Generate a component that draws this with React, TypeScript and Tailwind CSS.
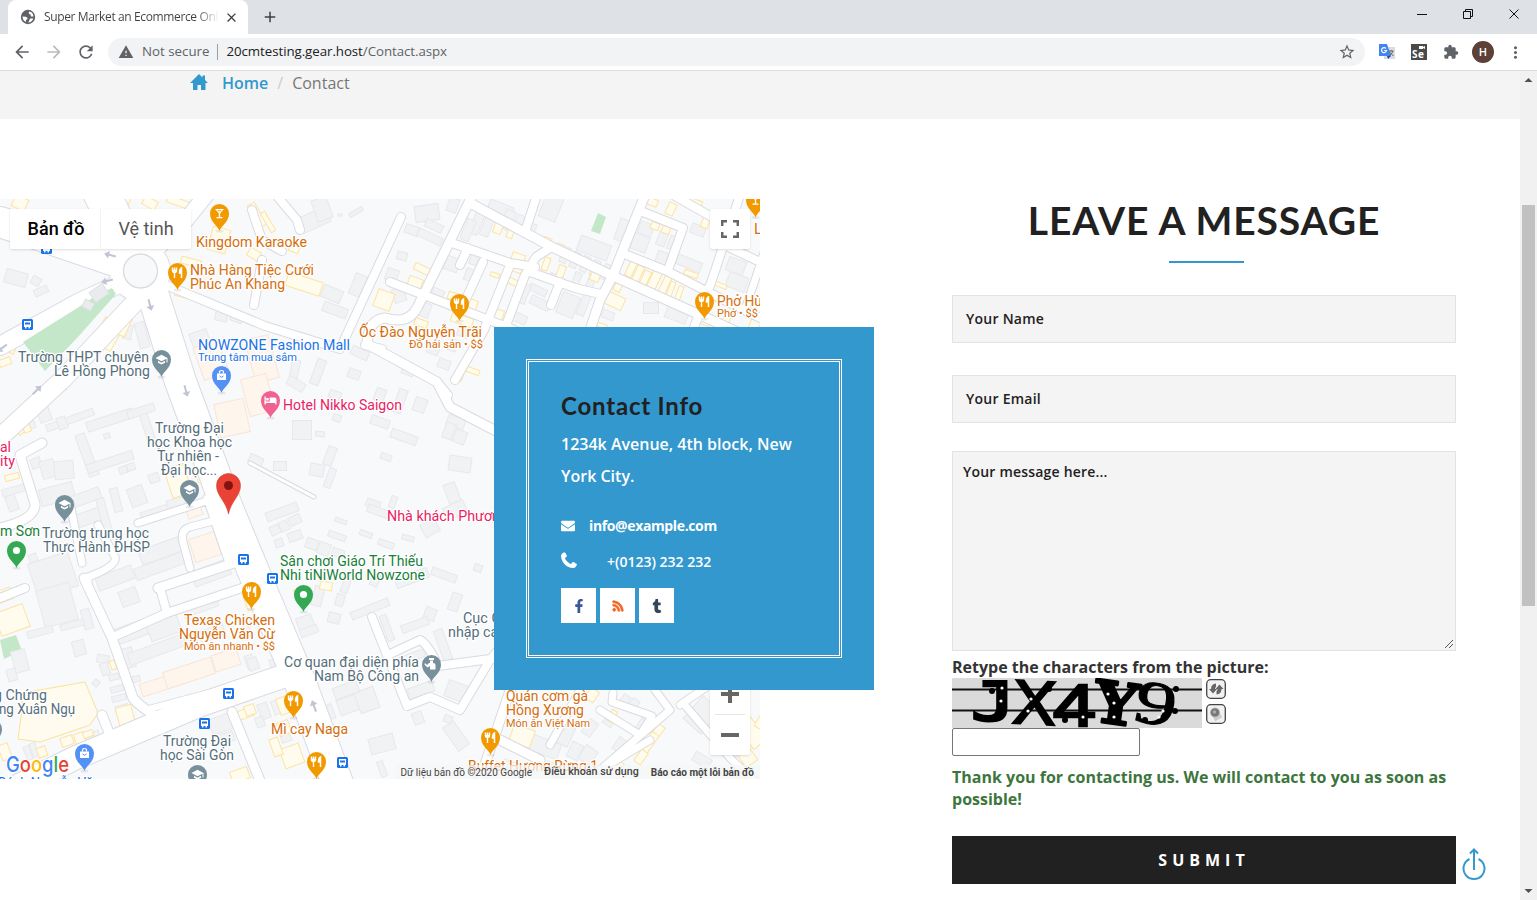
import React from "react";
import { FaFacebookF, FaRss, FaTumblr, FaEnvelope } from "react-icons/fa";
import { MdExtension, MdStarBorder, MdArrowBack, MdArrowForward, MdRefresh, MdWarning, MdClose, MdAdd, MdMoreVert } from "react-icons/md";

const roads: [string, number][] = [
  ["M150 285L180 380L226 505L262 592L300 682L340 790", 31],
  ["M290 674L200 705L75 758L20 785", 23],
  ["M128 280L80 302L0 346", 18],
  ["M137 300L62 380L-5 442", 18],
  ["M100 190L132 255", 36],
  ["M150 255L182 225L206 195", 15],
  ["M0 222L112 260", 30],
  ["M166 285L265 326L340 349L401 217", 8],
  ["M276 195L297 220L300 230M252 210L262 240L282 251M262 260L254 305", 8],
  ["M472 196L448 245L417 308Q408 325 385 318Q368 320 367 344L437 382L450 407L498 432", 9],
  ["M390 282L510 328L540 342", 8],
  ["M452 243L510 263L535 267M483 262L460 312M510 265L484 330L455 380M468 248L460 265M437 382L448 395M365 345L382 349", 8],
  ["M470 203L550 246L613 276L700 315L760 342", 9],
  ["M537 195L525 232M550 248L536 257L525 275L505 328M530 272L575 288L600 294M560 282L551 305", 8],
  ["M645 195L613 275L600 300L590 330", 9],
  ["M643 212L683 228L668 270M627 255L667 271L710 293L760 318M740 195L712 280L693 330M720 243L760 262M675 196L710 216", 8],
  ["M765 250L745 310", 7],
  ["M42 443L20 455L35 504Q36 519 0 528", 9],
  ["M138 523L228 494M228 517L190 527Q180 530 183 542L190 568M207 498L216 525L228 560", 7],
  ["M158 588L255 556", 9],
  ["M70 503L82 563M98 525L115 557Q118 566 88 577L88 585", 7],
  ["M84 578L112 638L133 698Q140 707 162 720", 9],
  ["M113 637L167 613L260 582M160 588L167 613M0 598L25 588", 8],
  ["M145 710L220 690", 6],
  ["M232 712L263 788M102 715L114 745", 9],
  ["M372 617L407 706L430 697L460 710L490 660L498 650M390 654L420 640Q428 644 438 666L498 658", 8],
  ["M512 685L478 785M500 740L540 760", 9],
  ["M613 693L612 702L652 716L640 735L600 710M655 690L670 710L600 770L650 740M683 703L732 760M680 705L705 688M580 690L550 745M732 760L765 790", 7],
  ["M250 463L314 497", 3],
];

type B = [number, number, number, number, number];
const grey: B[] = [
  [16,278,22,14,15],[36,281,9,8,30],[41,291,14,7,-25],[222,313,12,16,12],[237,317,12,10,20],[128,332,8,14,10],[142,335,10,26,-15],[200,339,18,16,-20],[165,338,9,14,-10],
  [314,220,30,16,-25],[322,209,16,22,-20],[340,215,4,2,0],[356,212,15,4,-30],[427,213,24,16,-8],[453,205,10,14,20],[412,230,14,9,20],[434,226,18,8,25],[430,237,26,8,25],[402,256,10,8,15],[392,275,12,12,20],[358,285,12,22,22],[332,294,20,13,22],[335,310,25,10,20],[399,295,12,14,-20],[478,220,9,30,22],[488,224,9,25,22],[468,230,9,22,22],[500,210,25,14,22],[452,264,14,14,20],[475,257,8,16,20],[470,275,10,12,20],[438,293,12,8,25],[425,310,10,14,20],[453,345,8,12,20],[463,332,11,10,20],[444,364,12,9,20],[433,350,12,8,20],
  [295,369,8,18,12],[318,372,9,26,20],[296,384,18,9,30],[354,374,12,9,20],[360,353,18,9,25],[380,395,10,13,20],[335,395,12,8,20],[408,371,12,8,20],
  [552,205,18,30,22],[508,220,10,20,22],[519,224,9,18,22],[530,230,10,14,22],[594,248,32,16,20],[622,230,10,22,20],[565,255,7,16,23],[575,260,7,16,23],[585,264,7,16,23],[595,268,7,16,23],[606,272,7,16,23],[556,278,13,7,20],[576,281,7,18,22],[590,284,7,16,22],[538,290,18,7,25],[540,303,20,9,25],[568,305,18,22,22],[584,304,8,24,22],[522,293,12,20,22],[517,317,20,9,25],
  [646,229,14,12,20],[662,239,9,14,20],[673,243,9,14,20],[640,243,16,16,20],[661,260,11,17,20],[688,263,28,10,22],[736,266,18,14,20],[737,282,20,15,20],[651,308,15,11,0],[677,314,22,14,20],[608,315,12,8,20],[735,244,16,9,20],[698,230,14,10,20],
  [43,411,12,22,-20],[30,422,8,14,-20],[70,420,50,7,-20],[87,455,10,44,-20],[110,420,48,10,-18],[110,462,48,9,-18],[147,426,8,34,-18],[141,411,28,8,-18],[107,436,6,5,-15],[62,423,9,12,-20],[36,463,10,10,-20],[48,469,14,18,-15],[64,470,19,18,-5],[57,494,34,17,-15],[123,470,8,7,-20],[131,467,8,7,-20],[154,478,10,9,-20],[137,496,16,19,-20],[84,498,34,12,-20],[87,518,36,13,-20],[116,500,8,24,-15],[105,519,8,42,-15],[15,490,26,7,-15],[12,503,10,16,-20],[162,510,44,8,-18],[176,503,18,9,-15],[213,508,6,16,-15],[230,542,7,18,-15],[33,558,8,8,-20],[53,575,42,36,-18],[163,550,48,15,-20],[160,566,52,12,-20],[115,578,38,14,-20],[211,573,38,16,-20],
  [57,605,34,38,-15],[40,632,26,7,-15],[87,619,9,20,-15],[79,648,12,15,-15],[20,661,14,22,-15],[12,675,9,12,-15],[72,625,24,6,-15],[129,597,18,16,-20],[136,630,46,16,-20],[164,628,32,18,-20],[200,606,36,12,-20],[128,658,12,20,-15],[161,648,68,12,-20],[205,636,40,12,-20],[103,659,12,8,10],[105,669,8,12,-20],[114,677,10,6,-15],[117,689,13,6,-15],[119,698,14,6,-15],[122,708,13,6,-15],[96,683,6,6,40],[136,679,8,6,-15],[250,662,8,14,-20],[145,723,9,7,-15],[221,724,22,16,-20],[91,738,18,10,-20],[28,753,6,14,-20],[34,750,6,14,-20],[55,765,8,12,-20],[246,632,9,12,-20],[226,738,16,10,-20],
  [337,418,8,7,20],[302,430,19,19,0],[320,434,9,5,5],[380,422,19,9,20],[404,437,27,9,20],[400,401,9,24,20],[420,405,12,14,20],[456,422,18,10,20],[460,437,12,13,20],[449,431,10,16,20],[460,464,22,15,8],[386,457,11,6,20],[280,466,13,9,0],[256,460,14,8,25],[330,456,9,19,20],[317,470,14,12,10],[330,478,7,20,20],[452,493,12,20,-20],[455,510,22,13,-25],[430,528,16,14,-30],[373,504,14,8,20],[380,512,26,8,20],[393,502,6,12,20],[282,512,33,9,-20],[275,530,10,9,-25],[284,526,9,10,-25],[295,520,12,9,-25],[295,536,14,9,-20],[279,543,8,8,-20],[337,536,18,6,20],[366,534,13,5,20],[386,544,16,6,20],[408,538,12,5,15],[341,521,12,4,20],[312,544,12,10,20],[324,549,12,12,20],[338,553,12,8,20],[444,575,26,8,20],[478,568,8,7,20],[375,580,8,12,20],
  [318,596,10,20,15],[334,618,12,10,15],[340,600,8,12,15],[346,585,7,16,20],[305,622,16,12,-20],[309,631,18,8,-20],[370,609,40,8,-22],[412,578,34,10,-20],[455,602,10,18,20],[430,614,11,12,20],[415,625,28,8,-20],[387,628,7,27,-20],[443,645,9,32,-20],[412,657,26,8,-20],[421,690,26,11,-20],[456,691,20,17,20],[316,717,37,15,-20],[348,705,20,16,-20],[367,700,20,22,-20],[346,690,25,12,-20],[382,744,25,16,-15],[456,736,13,28,-35],[418,718,10,12,-20],[448,719,8,7,20],[382,769,6,16,-20],[273,663,6,8,-20],[253,664,10,12,-20],[264,711,10,16,-20],[277,707,9,14,-20],[286,738,10,8,-20],[260,722,8,10,-20],
  [625,700,8,10,35],[634,704,8,10,35],[610,720,10,12,35],[590,728,10,16,35],[565,735,14,20,25],[575,751,12,16,25],[545,747,30,16,20],[588,755,14,16,35],[620,745,10,14,35],[642,725,8,12,35],[702,715,24,30,42],[735,748,13,20,40],[702,760,18,10,30],[512,768,20,12,20],[555,770,20,12,20],
];
const yellow: B[] = [
  [100,202,10,13,20],[112,203,8,14,20],[125,201,9,12,20],[150,203,14,9,30],[178,202,22,7,20],[20,203,14,12,25],[257,215,8,25,-30],[268,222,5,22,-30],[219,240,18,24,15],[254,254,12,9,30],[294,249,10,6,20],[191,262,20,7,15],[182,294,14,6,15],[304,284,36,14,18],[124,315,10,9,20],[108,334,21,28,30],[122,325,14,20,25],[10,349,10,7,25],[5,362,12,7,-20],[60,389,12,7,-30],[25,423,7,19,-20],[19,429,6,11,-35],[12,477,14,6,-15],[178,481,20,30,-18],[201,475,10,13,-20],[5,595,14,12,-20],[12,620,30,24,-20],[113,665,5,9,-20],[126,718,16,24,-15],[244,714,19,9,-20],[67,741,12,9,-20],[80,739,10,12,-20],[88,734,10,6,-20],[42,752,9,10,-20],[5,752,10,16,-20],[62,760,10,14,-20],[240,775,18,12,-20],[302,591,16,5,-10],[326,586,12,8,10],[252,602,13,14,-20],[285,705,14,17,-20],[292,756,20,20,-20],[276,747,9,18,-20],[250,710,10,10,-20],[284,728,12,14,-20],
  [422,269,16,7,25],[415,283,14,11,20],[384,300,17,18,20],[421,323,13,7,20],[453,296,10,7,15],[462,320,22,9,20],[472,305,10,11,20],[473,371,13,5,20],[461,376,4,9,20],[498,228,8,11,20],[510,234,6,8,20],[495,275,9,4,20],[498,315,10,11,20],[547,240,9,5,20],[560,248,6,8,20],[518,258,13,9,20],[515,269,14,5,20],[546,264,6,13,20],[561,272,7,13,20],[511,281,14,6,25],[595,277,9,8,20],[631,269,7,16,25],[638,274,7,17,25],[645,279,7,17,25],[654,281,9,20,25],[665,285,7,18,25],[671,289,5,15,20],[679,294,5,16,20],[675,275,8,4,20],[691,274,14,5,20],[690,282,17,5,20],[720,285,14,4,20],[618,287,7,9,25],[615,301,18,13,25],[704,319,14,11,20],[725,323,7,16,20],[755,324,10,10,20],[655,226,8,7,20],[666,230,8,7,20],[671,209,8,12,25],[652,202,11,7,20],[694,202,16,6,20],[706,221,7,14,20],[600,325,14,4,20],
  [592,695,10,12,35],[612,716,6,12,30],[522,736,22,18,20],[650,742,8,22,35],[659,730,8,10,35],[641,757,8,14,35],[618,766,8,10,35],[752,733,18,28,-40],[765,725,18,12,30],[748,758,14,14,-35],[510,702,14,12,20],
];
const peach: B[] = [[211,360,26,34,-20],[262,359,24,44,-15],[232,418,30,34,-12],[258,395,26,38,-15],[194,511,15,12,-20],[205,547,27,24,-18],[165,683,50,13,-18],[189,673,50,17,-18],[226,660,26,17,-18]];

function Blocks({ list, fill, stroke }: { list: B[]; fill: string; stroke: string }) {
  return (
    <g fill={fill} stroke={stroke} strokeWidth="1">
      {list.map(([x, y, w, h, a], i) => (
        <rect key={i} x={x - w / 2} y={y - h / 2} width={w} height={h} transform={`rotate(${a} ${x} ${y})`} />
      ))}
    </g>
  );
}

const glyphs: Record<string, React.ReactNode> = {
  food: <g fill="none" stroke="#fff"><path d="M-5-5v3.200q0 1.800 2 1.800t2-1.800V-5M-3-5V5.500" strokeWidth="1.400" /><path d="M-5-2.500h4v1.500h-4z" fill="#fff" strokeWidth=".5" /><path d="M4 5.500V-4.500q-2 1-2 5h2" strokeWidth="1.500" fill="#fff" /></g>,
  bar: <path d="M-4.500-4.500h9L.7-.2V3.500H3v1.200h-6V3.500h2.300V-.2zM-2-3.300l.8 1h2.400l.8-1z" fillRule="evenodd" fill="#fff" />,
  school: <path d="M-6-1.500L0-4.800 6-1.500V3H5V-.7L0 1.800zM-3.500 1.300L0 3.200l3.500-1.900v2L0 5.100l-3.500-1.800z" fill="#fff" />,
  shop: <g><path d="M-4.500-2h9v6.500h-9z" fill="#fff" /><path d="M-2-2v-1q0-2 2-2t2 2v1" fill="none" stroke="#fff" strokeWidth="1.200" /><path d="M-2 .5Q0 3 2 .5" fill="none" stroke="#5491f5" /></g>,
  hotel: <path d="M-6-4h1.300V1H-.8V-3H4q2 0 2 2V4H4.700V2.500h-9.400V4H-6zM-4.200-2.500h2.400v2.400h-2.400z" fill="#fff" />,
  dot: <circle r="3.600" fill="#fff" />,
  officer: <g fill="#fff"><path d="M-2.500-6.500h5v2h-5zM-1.500-4h3v2.500h-3z" /><path d="M-6.500-1.500l2 2 2-2h4q2.500 0 2.500 2v4.500h-5.500V1.500l-2.500 1.500-3-3z" /></g>,
};
const pins: [number, number, string, string][] = [
  [219.5, 213.5, "#f29900", "bar"], [177.5, 272.5, "#f29900", "food"], [459.5, 303.5, "#f29900", "food"], [704.5, 301.5, "#f29900", "food"],
  [161.5, 359.5, "#78909c", "school"], [64.5, 504.5, "#78909c", "school"], [189.5, 489.5, "#78909c", "school"], [221.5, 375.5, "#5491f5", "shop"],
  [270.5, 400.5, "#f06292", "hotel"], [16.5, 550.5, "#34a853", "dot"], [303.5, 594.5, "#34a853", "dot"], [251.5, 591.5, "#f29900", "food"],
  [293.5, 700.5, "#f29900", "food"], [316.5, 761.5, "#f29900", "food"], [490.5, 737.5, "#f29900", "food"], [84.5, 753.5, "#5491f5", "shop"],
  [431.5, 664.5, "#78909c", "officer"], [197.5, 774.5, "#78909c", "school"], [755.5, 200, "#f29900", "bar"], [-7.5, 729, "#78909c", "dot"],
];
const buses = [[46.5, 248.5], [27.5, 324.5], [243.5, 559.5], [272.5, 578.5], [228.5, 693.5], [204.5, 723.5], [342.5, 762.5]];
const arrows: [number, number, number][] = [[110, 255, 195], [107, 281, 165], [150, 305, 75], [37, 390, -45], [186, 391, 75], [314, 706, -110], [2, 348, 145]];

const OR = "#d56e0c", BL = "#1a73e8", SL = "#546e7a", PK = "#e91e63", GR = "#188038";
const labels: [string, number, number, number, string, number][] = [
  ["Kingdom Karaoke", 196, 247, 111, OR, 14], ["Nhà Hàng Tiệc Cưới", 190, 275, 124, OR, 14], ["Phúc An Khang", 190, 289, 95, OR, 14],
  ["Ốc Đào Nguyễn Trãi", 359, 337, 123, OR, 14], ["Đồ hải sản • $$", 409, 348, 74, OR, 11], ["Phở Hùng", 717, 306, 60, OR, 14], ["Phở • $$", 717, 317, 41, OR, 11],
  ["L", 754, 234, 8, OR, 14],
  ["NOWZONE Fashion Mall", 198, 350, 152, BL, 14], ["Trung tâm mua sắm", 198, 361, 99, BL, 11],
  ["Trường THPT chuyên", 18, 362, 131, SL, 14], ["Lê Hồng Phong", 54, 376, 96, SL, 14], ["Hotel Nikko Saigon", 283, 410, 119, PK, 14],
  ["Trường Đại", 155, 433, 69, SL, 14], ["học Khoa học", 147, 447, 85, SL, 14], ["Tự nhiên -", 157, 461, 62, SL, 14], ["Đại học...", 161, 475, 56, SL, 14],
  ["al", 0, 452, 11, PK, 14], ["ity", 0, 466, 15, PK, 14], ["m Sơn", 0, 536, 40, GR, 14], ["Trường trung học", 42, 538, 107, SL, 14], ["Thực Hành ĐHSP", 43, 552, 107, SL, 14],
  ["Nhà khách Phương", 387, 521, 121, PK, 14], ["Sân chơi Giáo Trí Thiếu", 280, 566, 143, GR, 14], ["Nhi tiNiWorld Nowzone", 280, 580, 145, GR, 14],
  ["Texas Chicken", 184, 625, 91, OR, 14], ["Nguyễn Văn Cừ", 179, 639, 96, OR, 14], ["Món ăn nhanh • $$", 184, 650, 91, OR, 11],
  ["Cục Quản", 463, 623, 62, SL, 14], ["nhập cảnh", 448, 637, 66, SL, 14], ["Cơ quan đại diện phía", 284, 667, 135, SL, 14], ["Nam Bộ Công an", 314, 681, 105, SL, 14],
  ["g Chứng", -6, 700, 53, SL, 14], ["ng Xuân Ngụ", -1, 714, 76, SL, 14], ["Trường Đại", 163, 746, 68, SL, 14], ["học Sài Gòn", 160, 760, 74, SL, 14],
  ["Mì cay Naga", 271, 734, 77, OR, 14], ["Quán cơm gà", 506, 701, 82, OR, 14], ["Hồng Xương", 506, 715, 78, OR, 14], ["Món ăn Việt Nam", 506, 727, 84, OR, 11],
  ["Buffet Hương Rừng 1", 468, 771, 130, OR, 14], ["Bánh Nguyễn Văn", -2, 788, 102, BL, 14],
];

function CityMap() {
  return (
    <svg viewBox="0 199 760 580" width="760" height="580" className="block font-[Roboto,sans-serif]">
      <rect y="199" width="760" height="580" fill="#f8f9fb" />
      <path d="M598 213L606 217L600 234L591 231z" fill="#c5e7c9" />
      <path d="M0 640L16 635L22 651L4 659z" fill="#c5e7c9" />
      <path d="M22 693L85 682L98 713L90 725L40 742L18 739L22 710z" fill="#fffbee" stroke="#fde293" />
      <Blocks list={grey} fill="#f0f2f4" stroke="#e7e8ec" />
      <Blocks list={yellow} fill="#fffbed" stroke="#fde3a2" />
      <Blocks list={peach} fill="#fef5ed" stroke="#f8e5d5" />
      <g fill="none" stroke="#d9dbe2" strokeLinecap="round" strokeLinejoin="round">
        {roads.map(([d, w], i) => <path key={i} d={d} strokeWidth={w + 2} />)}
        <circle cx="140" cy="271" r="31" fill="#d9dbe2" stroke="none" />
      </g>
      <g fill="none" stroke="#fff" strokeLinecap="round" strokeLinejoin="round">
        <circle cx="140" cy="271" r="30" fill="#fff" stroke="none" />
        {roads.map(([d, w], i) => <path key={i} d={d} strokeWidth={w} />)}
      </g>
      <path d="M112 288L98 294L82 305L23 342L45 371L78 337L116 294z" fill="#c5e7c9" />
      <Blocks list={[[99, 293, 16, 12, -35], [88, 305, 10, 8, 30]]} fill="#e9ebee" stroke="#dfe1e5" />
      <circle cx="140.500" cy="271" r="17" fill="#f8f9fb" stroke="#d9dbe2" strokeWidth="1.300" />
      {arrows.map(([x, y, a], i) => (
        <path key={i} d="M-6-1H1V-4L6 0L1 4V1H-6z" fill="#c0c5d4" transform={`translate(${x} ${y}) rotate(${a})`} />
      ))}
      {buses.map(([x, y], i) => (
        <g key={i} transform={`translate(${x} ${y})`}>
          <rect x="-5.500" y="-5.500" width="11" height="11" rx="1.500" fill="#1a73e8" />
          <path d="M-3.500-3.500h7v6h-1v1.500h-1.500V2.500h-2v1.500h-1.500V2.500h-1z" fill="#fff" />
          <path d="M-2.500-2h5v2h-5z" fill="#1a73e8" />
        </g>
      ))}
      {pins.map(([x, y, c, g], i) => (
        <g key={i} transform={`translate(${x} ${y})`}>
          <ellipse cy="17.500" rx="4" ry="1.500" fill="#000" opacity=".08" />
          <path d="M0 17.500C-1.500 12-9.500 9-9.500 0A9.500 9.500 0 0 1 9.500 0C9.500 9 1.500 12 0 17.500z" fill={c} />
          {glyphs[g]}
        </g>
      ))}
      <path d="M228.500 514C226 501 216.500 496 216.500 485.500A12 12 0 0 1 240.500 485.500C240.500 496 231 501 228.500 514z" fill="#ea4335" stroke="#d23f31" strokeWidth=".6" />
      <circle cx="228.500" cy="485.500" r="4.500" fill="#811411" />
      <g stroke="#fff" strokeWidth="2.500" strokeLinejoin="round" paintOrder="stroke">
        {labels.map(([t, x, y, w, c, s], i) => (
          <text key={i} x={x} y={y} textLength={w} lengthAdjust="spacingAndGlyphs" fill={c} fontSize={s}>{t}</text>
        ))}
        <text x="6" y="772" textLength="63" fontSize="21" fontWeight="500" className="font-[Inter,sans-serif]" lengthAdjust="spacingAndGlyphs" strokeWidth="2">
          <tspan fill="#4285f4">G</tspan><tspan fill="#ea4335">o</tspan><tspan fill="#fbbc04">o</tspan><tspan fill="#4285f4">g</tspan><tspan fill="#34a853">l</tspan><tspan fill="#ea4335">e</tspan>
        </text>
      </g>
    </svg>
  );
}

function Browser() {
  return (
    <header className="shrink-0 font-['Open_Sans',sans-serif]">
      <div className="flex h-[34px] items-start justify-between bg-[#dee1e6]">
        <div className="flex">
          <div className="ml-2 flex h-[34px] w-[240px] items-center rounded-t-lg bg-white pl-3">
            <svg width="16" height="16" viewBox="0 0 16 16" className="shrink-0">
              <circle cx="8" cy="8" r="7.200" fill="#5f6368" />
              <path d="M9 2.500Q8 5 10.500 5.500L11 7.500H13.500Q13.500 5 11.500 3.300zM2.500 7.500L6 7.800Q8 8.500 7.500 10L6 11V13Q2.500 11.500 2.500 7.500zM13.300 9.500H10Q9.500 11.500 8 13.500Q12 13.500 13.300 9.500z" fill="#fff" />
            </svg>
            <span className="ml-2 w-[175px] overflow-hidden whitespace-nowrap bg-gradient-to-r from-[#3c4043] from-87% to-transparent bg-clip-text text-[12px] tracking-[-0.370px] text-transparent">Super Market an Ecommerce Online</span>
            <MdClose className="ml-[5px] size-[15px] shrink-0 text-[#3c4043]" />
          </div>
          <MdAdd className="mt-[8px] ml-[13px] size-[18px] text-[#3c4043]" />
        </div>
        <svg width="110" height="28" fill="none" stroke="#111" className="mr-[12px]">
          <path d="M2 14.500h10M48.500 11.500h7v7h-7zM50.500 11v-1.500h7v7H56M94.500 9.500l9 9M103.500 9.500l-9 9" />
        </svg>
      </div>
      <div className="flex h-[37px] items-center border-b border-[#dcdcdc] bg-white pl-[12px] pr-[12px] text-[#5f6368]">
        <MdArrowBack className="size-5 shrink-0" />
        <MdArrowForward className="ml-3 size-5 shrink-0 text-[#b9bbbd]" />
        <MdRefresh className="ml-3 size-5 shrink-0" />
        <div className="ml-3 flex h-7 w-[1257px] shrink-0 items-center rounded-full bg-[#f1f3f4] pl-[10px] pr-[9px] text-[13.300px]">
          <MdWarning className="size-4" />
          <span className="ml-2">Not secure</span>
          <span className="mx-[8px] h-4 w-px bg-[#9aa0a6]" />
          <span className="tracking-[-0.060px]"><span className="text-[#202124]">20cmtesting.gear.host</span>/Contact.aspx</span>
          <MdStarBorder className="ml-auto size-[18px]" />
        </div>
        <svg width="18" height="18" viewBox="0 0 18 18" className="ml-[13px] shrink-0">
          <rect x="6" y="4" width="11" height="12" fill="#dadce0" /><path d="M1 1h8l4 12H1z" fill="#4285f4" /><path d="M9 13h4l-3 3z" fill="#174ea6" />
          <path d="M8 5.500A2.500 2.500 0 1 0 8.500 7.500H6.300" fill="none" stroke="#fff" strokeWidth="1.200" /><path d="M10.500 8h5M13 7v1M15 8q-1 3-4 5M11.500 9l4 4" fill="none" stroke="#5f6368" />
        </svg>
        <svg width="16" height="16" viewBox="0 0 16 16" className="ml-[15px] shrink-0">
          <rect width="16" height="16" fill="#4a4a4a" /><path d="M8 2h4v3H8zM12 3l2-1v3l-2-1z" fill="#fff" />
          <text x="1" y="14" fontSize="10" fontWeight="700" fill="#fff" textLength="12">Se</text>
        </svg>
        <MdExtension className="ml-4 size-4 shrink-0" />
        <span className="ml-[13px] flex size-[22px] shrink-0 items-center justify-center rounded-full bg-[#5d4037] text-[11px] font-semibold text-white">H</span>
        <MdMoreVert className="ml-[12px] size-[19px] shrink-0" />
      </div>
    </header>
  );
}

function ContactCard() {
  const square = "flex size-[35px] items-center justify-center bg-white";
  return (
    <aside className="absolute left-[494px] top-[128px] h-[363px] w-[380px] bg-[#3398ce] p-8 font-['Open_Sans',sans-serif] text-white">
      <div className="h-full border-[3px] border-double border-white p-8">
        <h3 className="h-[26px] whitespace-nowrap font-[Lato,sans-serif] text-[24px] font-bold leading-[24px] tracking-[0.800px] text-[#212121]">Contact Info</h3>
        <p className="mt-2 text-[16px] font-semibold leading-8">1234k Avenue, 4th block, New<br />York City.</p>
        <div className="mt-4 flex h-9 items-center"><FaEnvelope className="size-[14px]" /><span className="-mt-[2px] ml-[14px] text-[14px] font-bold tracking-[-0.370px]">info@example.com</span></div>
        <div className="flex h-9 items-center">
          <svg width="16" height="16" viewBox="0 0 16 16" className="mb-1" fill="#fff"><path d="M3.300.2C1 1 0 2.500 0 4.200C.5 10.500 6 15.800 11.800 16C13.600 16 15.200 14.800 16 12.400C16 11.800 12.500 10 12 10C11.200 10 10.500 12 9.800 12C8.500 11.900 4.100 7.600 4 6.200C4 5.500 6 4.900 6 4C6 3.500 4.200.2 3.300.2z" /></svg>
          <span className="-mt-[2px] ml-[30px] text-[14px] font-semibold">+(0123) 232 232</span>
        </div>
        <div className="mt-2 flex gap-1">
          <span className={square}><FaFacebookF className="size-[14px] text-[#3b5998]" /></span>
          <span className={square}><FaRss className="size-[12px] text-[#f26522]" stroke="#f26522" strokeWidth="30" /></span>
          <span className={square}><FaTumblr className="size-[14px] text-[#35465c]" /></span>
        </div>
      </div>
    </aside>
  );
}

function Captcha() {
  return (
    <svg width="250" height="50" className="block bg-[#dadada]">
      <path d="M0 11.500H250M0 32.500H250" stroke="#111" strokeWidth="1.800" />
      <text x="17" y="44" fontSize="57" fontWeight="700" textLength="47" lengthAdjust="spacingAndGlyphs" className="font-['DejaVu_Sans_Mono',monospace]">J</text>
      <text x="61" y="46" fontSize="62" textLength="43" lengthAdjust="spacingAndGlyphs" stroke="#000" strokeWidth="2.500" transform="rotate(3 82 25)" className="font-['Liberation_Sans',sans-serif]">X</text>
      <text x="101" y="48" fontSize="60" textLength="43" lengthAdjust="spacingAndGlyphs" stroke="#000" strokeWidth="2.500" className="font-['Liberation_Sans',sans-serif]">4</text>
      <text x="142" y="46" fontSize="58" fontWeight="700" textLength="44" lengthAdjust="spacingAndGlyphs" stroke="#000" strokeWidth="2.500" strokeLinejoin="round" transform="rotate(8 163 25)" className="font-['DejaVu_Serif',serif]">Y</text>
      <text x="183" y="46" fontSize="62" textLength="42" lengthAdjust="spacingAndGlyphs" stroke="#000" transform="rotate(12 203 25)" className="font-['Liberation_Serif',serif]">9</text>
      <g>
        {[[40, 13], [97, 11], [113, 42], [224, 11], [223, 33], [193, 42]].map(([x, y]) => <circle key={x} cx={x} cy={y} r="3" />)}
      </g>
      <g fill="#fff">
        {[[50, 10], [49, 23], [79, 21], [76, 33], [131, 39], [156, 16], [162, 25], [162, 39], [211, 33], [207, 39]].map(([x, y]) => <circle key={`${x}-${y}`} cx={x} cy={y} r="1.600" />)}
      </g>
    </svg>
  );
}

function MessageForm() {
  const field = "flex h-12 items-center border border-[#e3e3e3] bg-[#f4f4f4] pb-[2px] pl-[13px] text-[14px] font-semibold tracking-[0.250px]";
  return (
    <form className="ml-[192px] w-[504px] font-['Open_Sans',sans-serif] text-[#212121]">
      <h2 className="mt-[-2px] text-center font-[Lato,sans-serif] text-[39px] font-bold leading-[46px] tracking-[0.900px] whitespace-nowrap">LEAVE A MESSAGE</h2>
      <div className="ml-[217px] mt-[18px] h-[2px] w-[75px] bg-[#3398ce]" />
      <div className={`${field} mt-8`}>Your Name</div>
      <div className={`${field} mt-8`}>Your Email</div>
      <div className="mt-7 flex h-[200px] items-start justify-between border border-[#e3e3e3] bg-[#f4f4f4] pl-[10px] pt-[10px] text-[14px] font-semibold leading-5 tracking-[0.200px]">
        Your message here...
        <svg width="12" height="12" className="self-end" stroke="#555"><path d="M2 10L10 2M6 10L10 6" /></svg>
      </div>
      <label className="mt-[5px] block text-[16px] font-bold leading-[22px] text-[#333]">Retype the characters from the picture:</label>
      <div className="flex">
        <Captcha />
        <div className="ml-1 mt-px flex flex-col gap-[5px]">
          <svg width="20" height="20" viewBox="0 0 20 20"><rect x=".7" y=".7" width="18.600" height="18.600" rx="4" fill="#f2f2f2" stroke="#444" strokeWidth="1.300" /><path d="M3 10h2q0-5 5-5.500V8q-1 .5-1 2h2l-4 4.500zM17.500 10h-2q0 5-5 5.500V12q1-.5 1-2h-2l4-4.500z" fill="#666" /></svg>
          <svg width="20" height="20" viewBox="0 0 20 20"><rect x=".7" y=".7" width="18.600" height="18.600" rx="4" fill="#f2f2f2" stroke="#444" strokeWidth="1.300" /><path d="M8 15l7-4" stroke="#ccc" strokeWidth="5" /><circle cx="9" cy="8.500" r="4.600" fill="#777" stroke="#bbb" /><circle cx="8.500" cy="8" r="1.800" fill="#aaa" /></svg>
        </div>
      </div>
      <input aria-label="captcha" className="block h-7 w-[188px] rounded-[2px] border border-[#767676] bg-white" />
      <p className="mt-[10px] text-[16px] font-bold leading-[22px] text-[#3c763d]">Thank you for contacting us. We will contact to you as soon as possible!</p>
      <button type="button" className="mt-[26px] block h-12 w-full bg-[#212121] text-[16px] font-bold tracking-[5px] text-white">SUBMIT</button>
    </form>
  );
}

export default function App() {
  return (
    <div className="flex h-[900px] w-[1537px] flex-col overflow-hidden bg-white">
      <Browser />
      <div className="flex min-h-0 flex-1">
        <main className="w-[1520px] overflow-hidden">
          <nav className="flex h-12 items-start bg-[#f4f4f4] pl-[190px] font-['Open_Sans',sans-serif] text-[16px] leading-6 text-[#777]">
            <svg width="18" height="17" viewBox="0 0 18 17" className="mt-[3px]" fill="#3398ce"><path d="M9 0L12.500 3.500V1.500H15V6L18 9H15.500V16H11V11H7.500V16H3V9H0z" /></svg>
            <span className="ml-[14px] font-semibold text-[#3398ce]">Home</span>
            <span className="mx-[9px] text-[#ccc]">/</span>
            <span>Contact</span>
          </nav>
          <div className="flex pt-20">
            <section className="relative h-[580px] w-[760px] shrink-0">
              <CityMap />
              <div className="absolute left-[10px] top-[10px] flex gap-px rounded-[2px] bg-gray-100 font-[Roboto,sans-serif] text-[18px] shadow">
                <button className="h-10 w-[90px] rounded-l-[2px] bg-white pb-[2px] pl-[2px] font-medium text-black">Bản đồ</button>
                <button className="h-10 w-[90px] rounded-r-[2px] bg-white pb-[2px] text-[#565656]">Vệ tinh</button>
              </div>
              <div className="absolute right-[10px] top-[10px] flex size-10 items-center justify-center rounded-[2px] bg-white shadow">
                <svg width="18" height="18" fill="none" stroke="#666" strokeWidth="2.500"><path d="M1.200 6V1.200H6M12 1.200h4.800V6M16.800 12v4.800H12M6 16.800H1.200V12" /></svg>
              </div>
              <div className="absolute right-[10px] top-[475px] flex h-[81px] w-10 flex-col items-center rounded-[2px] bg-white shadow">
                <svg width="18" height="81" stroke="#666" strokeWidth="4"><path d="M0 20H18M9 11V29M0 61H18" /></svg>
                <div className="-mt-[41px] h-px w-[30px] shrink-0 bg-[#e6e6e6]" />
              </div>
              <div className="absolute bottom-0 right-0 flex h-[14px] items-center justify-end whitespace-nowrap bg-[#f5f5f5]/75 pl-1 pr-[6px] font-[Roboto,sans-serif] text-[10px] text-[#444]">
                <span className="tracking-[0.020px]">Dữ liệu bản đồ ©2020 Google</span><span className="ml-3 text-[10.700px] font-medium">Điều khoản sử dụng</span><span className="ml-3 font-bold">Báo cáo một lỗi bản đồ</span>
              </div>
              <ContactCard />
            </section>
            <MessageForm />
            <svg width="24" height="34" viewBox="0 0 24 34" fill="none" stroke="#3398ce" strokeWidth="2" className="ml-[6px] mt-[649px] shrink-0"><path d="M12 1V22M8 5.500L12 1.500L16 5.500M7.500 11A10.500 10.500 0 1 0 16.500 11" /></svg>
          </div>
        </main>
        <div className="flex w-[17px] flex-col items-center bg-[#f1f1f1]">
          <svg width="17" height="134" fill="#505050"><path d="M4.500 11L8.500 7L12.500 11z" /></svg>
          <div className="h-[401px] w-[13px] bg-[#c1c1c1]" />
          <svg width="17" height="17" fill="#505050" className="mt-auto"><path d="M4.500 6L8.500 10L12.500 6z" /></svg>
        </div>
      </div>
    </div>
  );
}
